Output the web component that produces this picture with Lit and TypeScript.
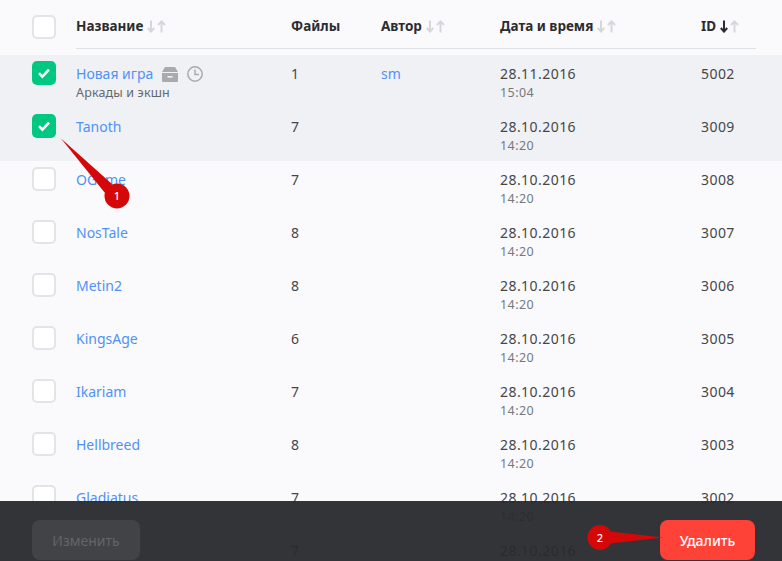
import { LitElement, html, css } from "lit";
import { customElement } from "lit/decorators.js";

const rows = [
  { n: "Новая игра", sub: "Аркады и экшн", f: 1, a: "sm", d: "28.11.2016", t: "15:04", id: 5002, on: true, icons: true },
  { n: "Tanoth", f: 7, d: "28.10.2016", t: "14:20", id: 3009, on: true },
  { n: "OGame", f: 7, d: "28.10.2016", t: "14:20", id: 3008 },
  { n: "NosTale", f: 8, d: "28.10.2016", t: "14:20", id: 3007 },
  { n: "Metin2", f: 8, d: "28.10.2016", t: "14:20", id: 3006 },
  { n: "KingsAge", f: 6, d: "28.10.2016", t: "14:20", id: 3005 },
  { n: "Ikariam", f: 7, d: "28.10.2016", t: "14:20", id: 3004 },
  { n: "Hellbreed", f: 8, d: "28.10.2016", t: "14:20", id: 3003 },
  { n: "Gladiatus", f: 7, d: "28.10.2016", t: "14:20", id: 3002 },
  { n: "", f: 7, d: "28.10.2016", t: "", id: 0 },
] as { n: string; sub?: string; f: number; a?: string; d: string; t: string; id: number; on?: boolean; icons?: boolean }[];

const arrows = (active = false) => html`<svg class="sort" width="19" height="13" viewBox="0 0 19 13">
  <path d="M4 0.5v11M0.8 8l3.2 3.6L7.2 8" fill="none" stroke=${active ? "#2b2c30" : "#d6d7db"} stroke-width="2"/>
  <path d="M14.5 12.5V1.5M11 5l3.5-3.6L18 5" fill="none" stroke="#d6d7db" stroke-width="2"/>
</svg>`;

@customElement("app-root")
export class AppRoot extends LitElement {
  static styles = css`
    :host { display: block; position: relative; width: 782px; height: 561px; overflow: hidden; background: #fafafc;
      font-family: "Noto Sans", "Open Sans", sans-serif; font-size: 14px; color: #45464a; }
    .grid { display: grid; grid-template-columns: 215px 90px 119px 201px 55px; }
    .head { display: flex; height: 55px; padding-left: 32px; box-sizing: border-box; }
    .box { width: 24px; height: 24px; box-sizing: border-box; border: 2px solid #e3e4e8; border-radius: 5px; background: #fff; flex: none; margin-right: 20px; }
    .head .box { margin-top: 15px; }
    .box.on { background: #00c880; border: 0; display: flex; align-items: center; justify-content: center; }
    .hcols { height: 49px; box-sizing: border-box; border-bottom: 1px solid #dfe0e4; align-items: start; padding-top: 16px; font-weight: 700; font-size: 13.5px; color: #2b2c30; line-height: 20px; }
    .hcols span { display: inline-flex; align-items: center; gap: 4px; }
    .row { display: flex; height: 53px; padding: 6px 0 0 32px; box-sizing: border-box; }
    .row.on { background: #f0f1f5; }
    .cell { line-height: 20px; padding-top: 3px; }
    .num { letter-spacing: 0.45px; }
    a { color: #5191f5; text-decoration: none; }
    .name { display: flex; align-items: center; gap: 9px; height: 20px; }
    .icons { display: flex; align-items: center; gap: 9px; }
    .sub { font-size: 12.5px; line-height: 17px; color: #66676b; letter-spacing: 0.15px; }
    .time { font-size: 12.5px; line-height: 17px; color: #77787c; }
    .bar { position: absolute; left: 0; right: 0; top: 501px; height: 60px; background: rgba(40,41,45,.95); display: flex; justify-content: space-between; padding: 19px 27px 0 32px; box-sizing: border-box; }
    .btn { height: 40px; border-radius: 8px; font-size: 14px; display: flex; align-items: center; justify-content: center; }
    .edit { width: 108px; background: #424347; color: #636468; }
    .del { width: 95px; background: #ff4238; color: #fff; font-weight: 500; }
    .marks { position: absolute; left: 0; top: 0; pointer-events: none; }
    .marks text { font-family: "Noto Sans", sans-serif; font-size: 11px; font-weight: 500; fill: #fff; text-anchor: middle; }
  `;

  render() {
    return html`
      <div class="head">
        <div class="box"></div>
        <div class="grid hcols">
          <span>Название ${arrows()}</span>
          <span>Файлы</span>
          <span>Автор ${arrows()}</span>
          <span>Дата и время ${arrows()}</span>
          <span>ID ${arrows(true)}</span>
        </div>
      </div>
      ${rows.map((r) => html`
        <div class="row ${r.on ? "on" : ""}">
          <div class="box ${r.on ? "on" : ""}">
            ${r.on ? html`<svg width="14" height="12" viewBox="0 0 14 12"><path d="M2 6.2l3.4 3.4L12 2.6" fill="none" stroke="#fff" stroke-width="2.6"/></svg>` : ""}
          </div>
          <div class="grid" style="flex:1">
            <div class="cell">
              <div class="name"><a>${r.n}</a>
                ${r.icons ? html`<div class="icons">
                  <svg width="16" height="15" viewBox="0 0 16 15"><path d="M3 0h10l3 5H0z" fill="#a9aaae"/><path d="M0 6h16v8a1 1 0 0 1-1 1H1a1 1 0 0 1-1-1z" fill="#a9aaae"/><rect x="5.5" y="9" width="5" height="1.6" fill="#f0f1f5"/></svg>
                  <svg width="16" height="16" viewBox="0 0 16 16"><circle cx="8" cy="8" r="7.2" fill="none" stroke="#a9aaae" stroke-width="1.5"/><path d="M8 3.5V8.5H12" fill="none" stroke="#a9aaae" stroke-width="1.5"/></svg>
                </div>` : ""}
              </div>
              ${r.sub ? html`<div class="sub">${r.sub}</div>` : ""}
            </div>
            <div class="cell">${r.f}</div>
            <div class="cell">${r.a ? html`<a>${r.a}</a>` : ""}</div>
            <div class="cell num">${r.d}<div class="time">${r.t}</div></div>
            <div class="cell num">${r.id || ""}</div>
          </div>
        </div>`)}
      <div class="bar">
        <div class="btn edit">Изменить</div>
        <div class="btn del">Удалить</div>
      </div>
      <svg class="marks" width="782" height="561">
        <path d="M61 138.5L112 184L105 193Z" fill="#d40808"/>
        <circle cx="117" cy="196" r="12.5" fill="#d40808"/>
        <text x="117" y="200">1</text>
        <path d="M606 531L663 537.5L606 544Z" fill="#d40808"/>
        <circle cx="600" cy="537.5" r="12.5" fill="#d40808"/>
        <text x="600" y="541.5">2</text>
      </svg>
    `;
  }
}
